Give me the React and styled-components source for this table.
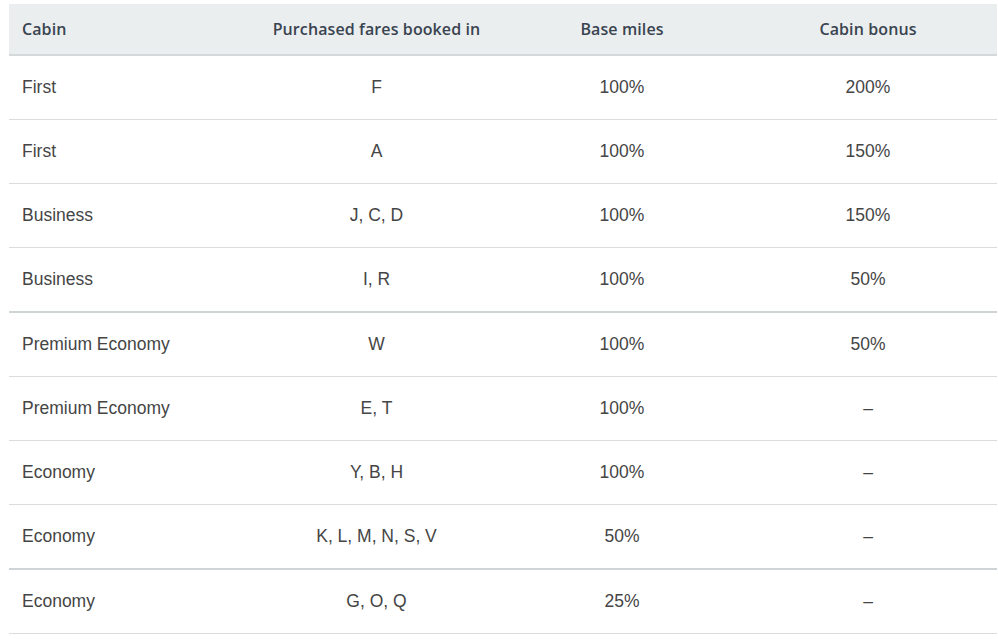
import React from "react";
import styled, { createGlobalStyle } from "styled-components";

const Global = createGlobalStyle`
  html, body { margin: 0; padding: 0; background: #ffffff; }
  body { font-family: "Liberation Sans", Arial, sans-serif; }
`;

const Page = styled.div`
  padding: 4px 1px 0 9px;
`;

const Table = styled.div`
  display: grid;
  grid-template-columns: 245px 245px 246px 1fr;
  width: 988px;
`;

const HeadCell = styled.div`
  height: 50px;
  display: flex;
  align-items: center;
  justify-content: ${(p) => (p.$left ? "flex-start" : "center")};
  padding: ${(p) => (p.$left ? "0 0 0 13px" : p.$last ? "0 6px 0 0" : "0")};
  background: #eaeeef;
  border-bottom: 2px solid #d3d9db;
  font-family: "Open Sans", "Noto Sans", sans-serif;
  font-weight: 600;
  font-size: 16px;
  color: #3a4450;
  letter-spacing: 0.1px;
`;

const Cell = styled.div`
  height: 63px;
  display: flex;
  align-items: center;
  justify-content: ${(p) => (p.$left ? "flex-start" : "center")};
  padding: ${(p) => (p.$left ? "0 0 0 13px" : p.$last ? "0 6px 0 0" : "0")};
  border-bottom: ${(p) => (p.$group ? "2px solid #cfd5d7" : "1px solid #dcdcdc")};
  font-size: 17.5px;
  color: #454545;
`;

const rows = [
  ["First", "F", "100%", "200%"],
  ["First", "A", "100%", "150%"],
  ["Business", "J, C, D", "100%", "150%"],
  ["Business", "I, R", "100%", "50%", true],
  ["Premium Economy", "W", "100%", "50%"],
  ["Premium Economy", "E, T", "100%", "–"],
  ["Economy", "Y, B, H", "100%", "–"],
  ["Economy", "K, L, M, N, S, V", "50%", "–", true],
  ["Economy", "G, O, Q", "25%", "–"],
];

export default function App() {
  return (
    <>
      <Global />
      <Page>
        <Table>
          <HeadCell $left>Cabin</HeadCell>
          <HeadCell>Purchased fares booked in</HeadCell>
          <HeadCell>Base miles</HeadCell>
          <HeadCell $last>Cabin bonus</HeadCell>
          {rows.map((r, i) => (
            <React.Fragment key={i}>
              <Cell $left $group={r[4]}>{r[0]}</Cell>
              <Cell $group={r[4]}>{r[1]}</Cell>
              <Cell $group={r[4]}>{r[2]}</Cell>
              <Cell $last $group={r[4]}>{r[3]}</Cell>
            </React.Fragment>
          ))}
        </Table>
      </Page>
    </>
  );
}
